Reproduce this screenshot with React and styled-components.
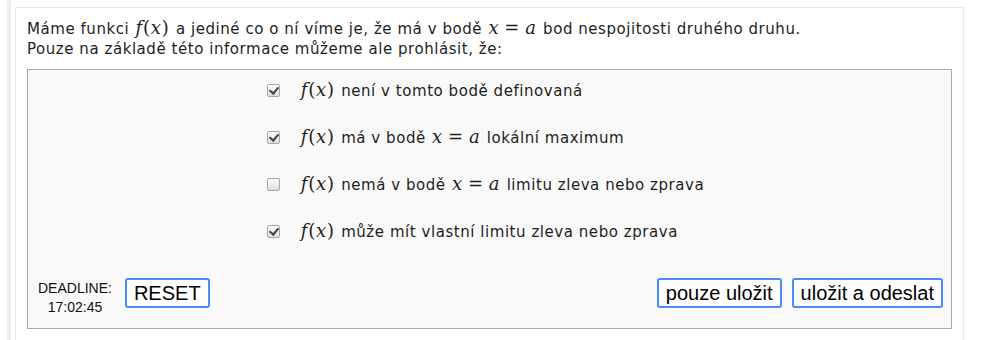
import { useState } from "react";
import styled, { createGlobalStyle } from "styled-components";

const GlobalStyle = createGlobalStyle`
  html, body {
    margin: 0;
    padding: 0;
    background: #fff;
  }
  body {
    font-family: "DejaVu Sans", Verdana, sans-serif;
    color: #1e1e1e;
  }
`;

const Page = styled.div`
  margin-left: 7px;
  padding-left: 4px;
  border-left: 4px solid #eeeeee;
  min-height: 340px;
  box-sizing: border-box;
  padding-top: 7px;
  padding-right: 18px;
`;

const Card = styled.div`
  border: 1px solid #e8e8e8;
  border-bottom: none;
  padding: 11px 11px 16px 11px;
  background: #fff;
`;

const Question = styled.p`
  margin: 0 0 10px 0;
  font-size: 15px;
  line-height: 20px;
  letter-spacing: 0.55px;
`;

const MathSpan = styled.span`
  font-family: "DejaVu Serif", "Liberation Serif", serif;
  font-size: 18px;
  line-height: 1;
  letter-spacing: 0.8px;
  white-space: nowrap;
  margin: 0 1px;
`;

const MathVar = styled.i`
  font-style: italic;
`;

const MathOp = styled.span`
  font-style: normal;
  margin: ${(p) => (p.$wide ? "0 5px" : "0")};
`;

const AnswerBox = styled.div`
  border: 1px solid #a9a9a9;
  background: #f9f9f9;
  padding: 9px 8px 11px 0;
`;

const Options = styled.div`
  display: flex;
  justify-content: center;
`;

const OptionList = styled.div`
  display: flex;
  flex-direction: column;
  gap: 25px;
`;

const Option = styled.label`
  display: flex;
  align-items: center;
  height: 22px;
  font-size: 15px;
  letter-spacing: 0.55px;
  cursor: pointer;
`;

const Check = styled.input`
  appearance: none;
  width: 13px;
  height: 13px;
  margin: 0 20px 0 0;
  border: 1px solid #a6a6a6;
  border-radius: 2px;
  background: linear-gradient(#fdfdfd, #dedede);
  position: relative;
  box-sizing: border-box;
  &:checked::after {
    content: "";
    position: absolute;
    left: 3px;
    top: 0px;
    width: 4px;
    height: 7px;
    border: solid #444;
    border-width: 0 2px 2px 0;
    transform: rotate(40deg);
  }
`;

const OptionText = styled.span`
  display: inline-flex;
  align-items: baseline;
  white-space: pre;
`;

const Footer = styled.div`
  display: flex;
  align-items: flex-start;
  margin-top: 36px;
`;

const Deadline = styled.div`
  font-family: "Liberation Sans", Arial, sans-serif;
  font-size: 14px;
  line-height: 19px;
  text-align: center;
  padding: 1px 10px 0 10px;
  color: #111;
`;

const Spacer = styled.div`
  flex: 1;
`;

const Button = styled.button`
  font-family: "Liberation Sans", Arial, sans-serif;
  font-size: 20px;
  height: 30px;
  padding: 0 7px;
  margin-left: ${(p) => p.$gap || 0}px;
  background: #fff;
  color: #000;
  border: 2px solid #4a8df6;
  border-radius: 3px;
  line-height: 24px;
  cursor: pointer;
`;

const Fx = () => (
  <MathSpan>
    <MathVar>f</MathVar>
    <MathOp>(</MathOp>
    <MathVar>x</MathVar>
    <MathOp>)</MathOp>
  </MathSpan>
);

const XeqA = () => (
  <MathSpan>
    <MathVar>x</MathVar>
    <MathOp $wide>=</MathOp>
    <MathVar>a</MathVar>
  </MathSpan>
);

const options = [
  { id: 1, parts: [<Fx key="f" />, " není v tomto bodě definovaná"], checked: true },
  { id: 2, parts: [<Fx key="f" />, " má v bodě ", <XeqA key="x" />, " lokální maximum"], checked: true },
  { id: 3, parts: [<Fx key="f" />, " nemá v bodě ", <XeqA key="x" />, " limitu zleva nebo zprava"], checked: false },
  { id: 4, parts: [<Fx key="f" />, " může mít vlastní limitu zleva nebo zprava"], checked: true },
];

export default function App() {
  const [checked, setChecked] = useState(options.map((o) => o.checked));

  const toggle = (i) => {
    const next = [...checked];
    next[i] = !next[i];
    setChecked(next);
  };

  return (
    <>
      <GlobalStyle />
      <Page>
        <Card>
          <Question>
            Máme funkci <Fx /> a jediné co o ní víme je, že má v bodě <XeqA /> bod nespojitosti druhého druhu.
            <br />
            Pouze na základě této informace můžeme ale prohlásit, že:
          </Question>
          <AnswerBox>
            <Options>
              <OptionList>
                {options.map((o, i) => (
                  <Option key={o.id}>
                    <Check type="checkbox" checked={checked[i]} onChange={() => toggle(i)} />
                    <OptionText>{o.parts}</OptionText>
                  </Option>
                ))}
              </OptionList>
            </Options>
            <Footer>
              <Deadline>
                DEADLINE:
                <br />
                17:02:45
              </Deadline>
              <Button $gap={3} onClick={() => setChecked(options.map(() => false))}>RESET</Button>
              <Spacer />
              <Button>pouze uložit</Button>
              <Button $gap={10}>uložit a odeslat</Button>
            </Footer>
          </AnswerBox>
        </Card>
      </Page>
    </>
  );
}
